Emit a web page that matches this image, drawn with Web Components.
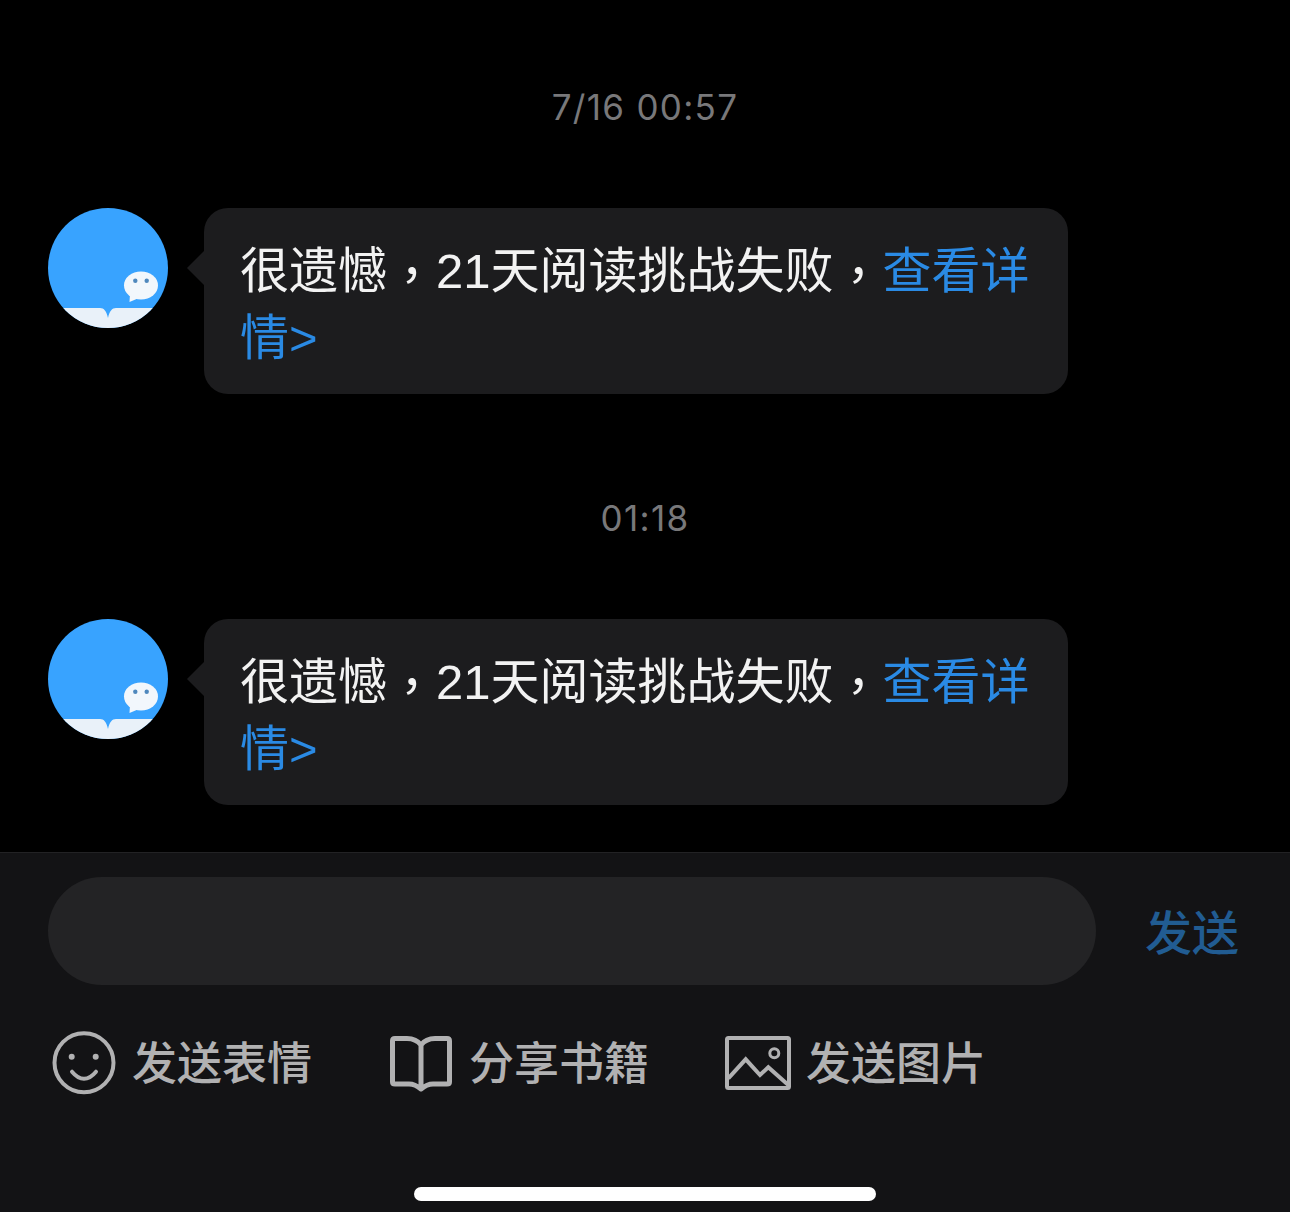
<!DOCTYPE html>
<html lang="zh">
<head>
<meta charset="utf-8">
<title>消息</title>
<style>
    html, body {
        margin: 0;
        background: #000;
        font-family: "Noto Sans CJK SC", "Noto Sans", sans-serif;
    }
    body {
        width: 1290px;
        height: 1212px;
        overflow: hidden;
    }
    /* reference has the comma centred in its cell, like a TC font */
    .comma {
        display: inline-block;
        width: 1em;
        line-height: 1;
        transform: translate(13px, -10px);
    }
</style>
</head>
<body>
<chat-page>
    <chat-time>7/16 00:57</chat-time>
    <chat-message>很遗憾<span class="comma">，</span>21天阅读挑战失败<span class="comma">，</span><a slot="link">查看详情&gt;</a></chat-message>
    <chat-time>01:18</chat-time>
    <chat-message>很遗憾<span class="comma">，</span>21天阅读挑战失败<span class="comma">，</span><a slot="link">查看详情&gt;</a></chat-message>
    <chat-composer slot="footer"></chat-composer>
</chat-page>

<script>
class ChatPage extends HTMLElement {
    constructor() {
        super();
        this.attachShadow({ mode: 'open' });
        this.shadowRoot.innerHTML = `
            <style>
                :host {
                    display: flex;
                    flex-direction: column;
                    height: 1212px;
                }
                .thread {
                    height: 768px;
                    padding-top: 84px;
                    overflow: hidden;
                }
            </style>
            <div class="thread"><slot></slot></div>
            <slot name="footer"></slot>
        `;
    }
}

class ChatTime extends HTMLElement {
    constructor() {
        super();
        this.attachShadow({ mode: 'open' });
        this.shadowRoot.innerHTML = `
            <style>
                :host {
                    display: block;
                    height: 46px;
                    line-height: 46px;
                    margin-bottom: 78px;
                    text-align: center;
                    font-family: Inter, "Noto Sans", sans-serif;
                    font-size: 35px;
                    font-weight: 400;
                    letter-spacing: 1.3px;
                    color: #78787a;
                }
            </style>
            <slot></slot>
        `;
    }
}

class ChatAvatar extends HTMLElement {
    constructor() {
        super();
        this.attachShadow({ mode: 'open' });
        this.shadowRoot.innerHTML = `
            <style>
                :host {
                    display: block;
                    width: 120px;
                    height: 120px;
                    flex: none;
                }
                svg { display: block; }
            </style>
            <svg width="120" height="120" viewBox="0 0 120 120">
                <defs>
                    <clipPath id="disc"><circle cx="60" cy="60" r="60"/></clipPath>
                </defs>
                <g clip-path="url(#disc)">
                    <rect width="120" height="120" fill="#38a3ff"/>
                    <path d="M0 100H52C56 100 58.5 103 60 110C61.5 103 64 100 68 100H120V120H0Z" fill="#e9f1f9"/>
                </g>
                <ellipse cx="93" cy="77.5" rx="17" ry="14" fill="#f2f7fc"/>
                <path d="M82 86L81.5 94L91 90Z" fill="#f2f7fc"/>
                <circle cx="87.3" cy="72.7" r="2.2" fill="#4f88bd"/>
                <circle cx="98.7" cy="72.7" r="2.2" fill="#4f88bd"/>
            </svg>
        `;
    }
}

class ChatMessage extends HTMLElement {
    constructor() {
        super();
        this.attachShadow({ mode: 'open' });
        this.shadowRoot.innerHTML = `
            <style>
                :host {
                    display: flex;
                    align-items: flex-start;
                    gap: 36px;
                    margin: 0 222px 101px 48px;
                }
                .bubble {
                    position: relative;
                    flex: 1;
                    padding: 30px 37px 22px 36px;
                    background: #1c1c1e;
                    border-radius: 24px;
                    font-family: "Liberation Sans", "Noto Sans CJK SC", sans-serif;
                    font-size: 49px;
                    line-height: 67px;
                    color: #f2f2f2;
                }
                .bubble::before {
                    content: "";
                    position: absolute;
                    left: -17px;
                    top: 43px;
                    border: 17px solid transparent;
                    border-left: 0;
                    border-right-color: #1c1c1e;
                }
                ::slotted(a) { color: #2a8ae4; }
            </style>
            <chat-avatar></chat-avatar>
            <div class="bubble"><slot></slot><slot name="link"></slot></div>
        `;
    }
}

class ToolButton extends HTMLElement {
    constructor() {
        super();
        this.attachShadow({ mode: 'open' });
        this.shadowRoot.innerHTML = `
            <style>
                :host {
                    display: flex;
                    align-items: center;
                    gap: 12px;
                    height: 72px;
                    font-size: 45px;
                    font-weight: 500;
                    color: #b1b1b2;
                }
                .label {
                    line-height: 68px;
                    padding-bottom: 4px;
                }
                ::slotted(svg) {
                    display: block;
                    width: 72px;
                    height: 72px;
                    fill: none;
                    stroke: #b1b1b2;
                }
            </style>
            <slot name="icon"></slot>
            <span class="label"><slot></slot></span>
        `;
    }
}

class ChatComposer extends HTMLElement {
    constructor() {
        super();
        this.attachShadow({ mode: 'open' });
        this.shadowRoot.innerHTML = `
            <style>
                :host {
                    display: block;
                    box-sizing: border-box;
                    height: 360px;
                    padding: 24px 0 0 48px;
                    background: #131315;
                    border-top: 1px solid #222224;
                }
                .input-row {
                    display: flex;
                    align-items: center;
                    gap: 49px;
                }
                .input {
                    width: 1048px;
                    height: 108px;
                    border-radius: 54px;
                    background: #232325;
                }
                .send {
                    font-size: 47px;
                    line-height: 104px;
                    padding-bottom: 2px;
                    font-weight: 500;
                    color: #215c92;
                }
                .tools {
                    display: flex;
                    gap: 73px;
                    margin-top: 42px;
                }
                .home {
                    width: 462px;
                    height: 14px;
                    margin: 88px 0 0 366px;
                    border-radius: 7px;
                    background: #fff;
                }
            </style>
            <div class="input-row">
                <div class="input"></div>
                <div class="send">发送</div>
            </div>
            <div class="tools">
                <tool-button>
                    <svg slot="icon" viewBox="0 0 72 72" stroke-width="4">
                        <circle cx="36" cy="35.7" r="29.5"/>
                        <circle cx="23.7" cy="29.7" r="3" fill="#b1b1b2" stroke="none"/>
                        <circle cx="47.7" cy="29.7" r="3" fill="#b1b1b2" stroke="none"/>
                        <path d="M24 44.7Q36 59 48 44.7" stroke-linecap="round"/>
                    </svg>
                    发送表情
                </tool-button>
                <tool-button>
                    <svg slot="icon" viewBox="0 0 72 72" stroke-width="5" stroke-linejoin="round">
                        <path d="M36 18C33 14 28 11.5 22 11.5H10Q7.5 11.5 7.5 14V55Q7.5 57 10 57H24Q30 57 36 62Q42 57 48 57H62Q64.5 57 64.5 55V14Q64.5 11.5 62 11.5H50C44 11.5 39 14 36 18V62"/>
                    </svg>
                    分享书籍
                </tool-button>
                <tool-button>
                    <svg slot="icon" viewBox="0 0 72 72" stroke-width="4">
                        <rect x="5" y="11" width="62" height="50" rx="1.5"/>
                        <path d="M6.3 51.3L23.7 32.3L38 48L46.3 40.3L66.3 58"/>
                        <circle cx="52.3" cy="26.3" r="4.5" stroke-width="3"/>
                    </svg>
                    发送图片
                </tool-button>
            </div>
            <div class="home"></div>
        `;
    }
}

customElements.define('chat-page', ChatPage);
customElements.define('chat-time', ChatTime);
customElements.define('chat-avatar', ChatAvatar);
customElements.define('chat-message', ChatMessage);
customElements.define('tool-button', ToolButton);
customElements.define('chat-composer', ChatComposer);
</script>
</body>
</html>
